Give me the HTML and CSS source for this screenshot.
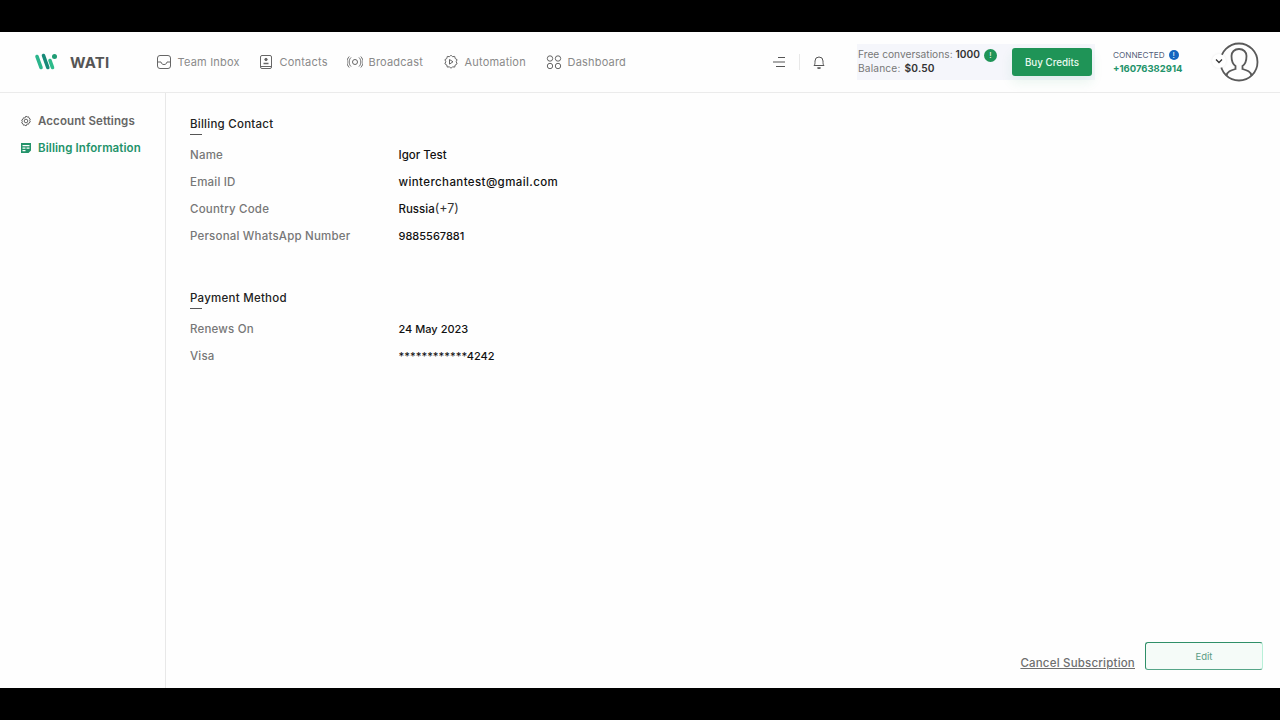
FILE: index.html
```html
<!DOCTYPE html>
<html lang="en">
<head>
<meta charset="utf-8">
<title>WATI Billing</title>
<link rel="stylesheet" href="styles.css">
</head>
<body>
<div class="letterbox"></div>
<div class="app">
  <header class="topbar">
    <div class="brand">
      <svg class="logo" width="24" height="20" viewBox="0 0 24 20"><g stroke-width="3.600" stroke-linecap="round"><path d="M3 4.500l4 11" stroke="#2bb58c"/><path d="M9.500 3.500l4.300 12" stroke="#178a78"/><path d="M16 8.500l2.500 7" stroke="#2dbb8a"/></g><circle cx="20.500" cy="4.500" r="2.500" fill="#1f9c74"/></svg>
      <span class="brand-name">WATI</span>
    </div>
    <nav class="nav">
      <a class="nav-item nav-inbox"><svg width="16" height="16" viewBox="0 0 16 16" fill="none" stroke="#666" stroke-width="1"><rect x="1.500" y="1.500" width="13" height="13" rx="2.500"/><path d="M1.500 8h3.500c.5 2 1.500 2.500 3 2.500s2.500-.5 3-2.500h3.500"/></svg>Team Inbox</a>
      <a class="nav-item nav-contacts"><svg width="16" height="16" viewBox="0 0 16 16" fill="none" stroke="#666" stroke-width="1"><rect x="2.500" y="1.500" width="11" height="13" rx="1.500"/><path d="M2.500 12.500h11" /><circle cx="8" cy="5.500" r="1.200" fill="#666"/><path d="M5.500 9.500h5" stroke-width="1.500"/></svg>Contacts</a>
      <a class="nav-item nav-broadcast"><svg width="16" height="16" viewBox="0 0 16 16" fill="none" stroke="#666" stroke-width="1"><circle cx="8" cy="8" r="2.500"/><path d="M4 3.500c-2.500 2.500-2.500 6.500 0 9M12 3.500c2.500 2.500 2.500 6.500 0 9M2.200 2.500c-3 3.500-3 7.500 0 11M13.800 2.500c3 3.500 3 7.500 0 11"/></svg>Broadcast</a>
      <a class="nav-item nav-automation"><svg width="16" height="16" viewBox="0 0 16 16" fill="none" stroke="#666" stroke-width="1"><path d="M8 1.200l1.500 1.500 2.200-.3.500 2.100 1.900 1.200-.9 2 .9 2.100-1.900 1.200-.5 2.100-2.200-.3L8 14.300l-1.500-1.500-2.200.3-.5-2.100-1.900-1.200.9-2.100-.9-2 1.900-1.200.5-2.100 2.200.3z"/><path d="M6.500 5.500l3.500 2.300-3.500 2.300z"/></svg>Automation</a>
      <a class="nav-item nav-dashboard"><svg width="16" height="16" viewBox="0 0 16 16" fill="none" stroke="#666" stroke-width="1"><circle cx="4" cy="4.500" r="2.700"/><circle cx="12" cy="4.500" r="2.700"/><circle cx="4" cy="12" r="2.700"/><circle cx="12" cy="12" r="2.700"/></svg>Dashboard</a>
    </nav>
    <div class="tools">
      <svg width="14" height="12" viewBox="0 0 14 12" stroke="#555" stroke-width="1.200"><path d="M6 1.500h7M1 6h12M4 10.500h9"/></svg>
      <span class="tool-sep"></span>
      <svg width="14" height="15" viewBox="0 0 14 15" fill="none" stroke="#555" stroke-width="1"><path d="M2 10.500c1-1 1-2 1-4.500a4 4 0 0 1 8 0c0 2.500 0 3.500 1 4.500z"/><path d="M5.500 12.500c.8 1 2.200 1 3 0" stroke-width="1.500"/></svg>
    </div>
    <div class="credits">
      <div class="credit-text">
        <div>Free conversations: <b>1000</b><i class="dot dot-green">!</i></div>
        <div class="credit-balance">Balance: <b>$0.50</b></div>
      </div>
      <button class="buy">Buy Credits</button>
    </div>
    <div class="status">
      <div class="status-top">CONNECTED<i class="dot dot-blue">!</i></div>
      <div class="phone">+16076382914</div>
    </div>
    <div class="avatar">
      <span class="chev"><svg width="8" height="6" viewBox="0 0 8 6" fill="none" stroke="#333" stroke-width="1.300"><path d="M1 1.500l3 3 3-3"/></svg></span>
      <svg width="40" height="40" viewBox="0 0 40 40" fill="none" stroke="#5a5a5a" stroke-width="1.800"><circle cx="20" cy="20" r="18.500"/><path d="M7.500 33.500c1-4 4-5 9-6.500v-3c-3-2-4-6-4-10 0-4 3-7 7.500-7s7.500 3 7.500 7c0 4-1 8-4 10v3c5 1.500 8 2.500 9 6.500"/></svg>
    </div>
  </header>
  <div class="workspace">
    <aside class="sidebar">
      <a class="side-item"><svg width="12" height="12" viewBox="0 0 12 12" fill="none" stroke="#666" stroke-width="1"><circle cx="6" cy="6" r="1.800"/><path d="M6 1l1.100 1 1.500-.2.400 1.400 1.300.8-.6 1.500.6 1.500-1.300.8-.4 1.400-1.500-.2L6 11l-1.100-1-1.500.2L3 8.800 1.700 8l.6-1.500-.6-1.500L3 4.200l.4-1.400 1.500.2z"/></svg>Account Settings</a>
      <a class="side-item active"><svg width="12" height="12" viewBox="0 0 12 12" fill="#23936a"><path d="M1 1h10v7.500L8.500 11H1zM2.500 3v1.300h7V3zM2.500 5.500v1.200h3V5.500zM6.500 5.500v1.200h3V5.500zM2.500 8v1.300h3V8z" fill-rule="evenodd"/></svg>Billing Information</a>
    </aside>
    <main class="content">
      <section class="block block-contact">
        <h2 class="block-title">Billing Contact</h2>
        <div class="row"><span class="label">Name</span><span class="value value-text">Igor Test</span></div>
        <div class="row"><span class="label">Email ID</span><span class="value value-text value-email">winterchantest@gmail.com</span></div>
        <div class="row"><span class="label">Country Code</span><span class="value value-text">Russia<span class="light">(+7)</span></span></div>
        <div class="row"><span class="label">Personal WhatsApp Number</span><span class="value">9885567881</span></div>
      </section>
      <section class="block">
        <h2 class="block-title">Payment Method</h2>
        <div class="row"><span class="label">Renews On</span><span class="value">24 May 2023</span></div>
        <div class="row"><span class="label">Visa</span><span class="value">************4242</span></div>
      </section>
      <div class="actions">
        <a class="cancel">Cancel Subscription</a>
        <button class="edit">Edit</button>
      </div>
    </main>
  </div>
</div>
<div class="letterbox"></div>
</body>
</html>
```

FILE: styles.css
```css
* { box-sizing: border-box; }
html, body { margin: 0; height: 100%; }
body {
  display: flex;
  flex-direction: column;
  height: 720px;
  overflow: hidden;
  background: #000;
  font-family: Inter, "Liberation Sans", sans-serif;
  color: #111;
}
.letterbox { height: 32px; flex: none; background: #000; }
.app { height: 656px; display: flex; flex-direction: column; background: #fefefe; }

.topbar {
  height: 61px;
  flex: none;
  display: flex;
  align-items: center;
  border-bottom: 1px solid #ebebeb;
}
.brand { width: 156px; flex: none; display: flex; align-items: center; padding-left: 34px; gap: 12px; }
.logo { flex: none; }
.brand-name { font-size: 15px; font-weight: 700; color: #555; letter-spacing: .2px; }
.nav { display: flex; align-items: center; font-size: 11px; color: #8a8a8a; }
.nav-item { display: flex; align-items: center; gap: 5.500px; letter-spacing: .2px; }
.nav-inbox { width: 102px; }
.nav-contacts { width: 89px; }
.nav-broadcast { width: 96px; }
.nav-automation { width: 103px; }
.nav-dashboard { width: 90px; }
.tools { margin-left: 136px; width: 55px; display: flex; align-items: center; flex: none; }
.tool-sep { width: 1px; height: 16px; background: #e8e8e8; margin: 0 12px 0 13px; }
.credits {
  margin-left: 30px;
  width: 238px;
  flex: none;
  display: flex;
  align-items: center;
  background: #f5f6fb;
  height: 36px;
}
.credit-text {
  width: 155px;
  height: 36px;
  padding: 4px 0 0 1px;
  font-size: 10.200px;
  line-height: 13px;
  color: #777;
  white-space: nowrap;
}
.credit-text b { font-weight: 600; color: #333; }
.credit-balance { word-spacing: 1px; letter-spacing: .15px; }
.dot {
  display: inline-block;
  width: 13px;
  height: 13px;
  border-radius: 50%;
  margin-left: 4px;
  color: #fff;
  font-size: 8px;
  line-height: 13px;
  text-align: center;
  font-style: normal;
  vertical-align: 0;
}
.dot-green { background: #1f9457; }
.dot-blue { background: #1466c0; width: 10px; height: 10px; line-height: 10px; }
.buy {
  width: 80px;
  height: 28px;
  border: 0;
  border-radius: 3px;
  background: #1f9457;
  color: #eafaf0;
  font: 500 9.800px Inter, "Liberation Sans", sans-serif;
  box-shadow: 0 6px 12px rgba(35, 160, 100, .1);
}
.status { width: 90px; flex: none; margin-left: 18px; padding-top: 1px; }
.status-top { font-size: 8.200px; color: #555f7a; line-height: 13px; white-space: nowrap; }
.phone { font-size: 9.500px; font-weight: 700; color: #23936a; line-height: 14px; }
.avatar { position: relative; width: 40px; height: 40px; margin-left: 16px; flex: none; }
.avatar > svg { display: block; }
.chev {
  position: absolute;
  left: -7px;
  top: 12px;
  width: 14px;
  height: 14px;
  border-radius: 50%;
  background: #fff;
  box-shadow: 0 0 3px rgba(0, 0, 0, .08);
  display: flex;
  align-items: center;
  justify-content: center;
}

.workspace { flex: 1; display: flex; min-height: 0; }
.sidebar {
  width: 166px;
  flex: none;
  border-right: 1px solid #e8e8e8;
  padding: 14px 0 0 20px;
}
.side-item {
  display: flex;
  align-items: center;
  gap: 6px;
  height: 27px;
  font-size: 11.500px;
  letter-spacing: .1px;
  font-weight: 600;
  color: #666;
  white-space: nowrap;
}
.side-item.active { color: #23936a; }
.content { flex: 1; position: relative; padding: 22px 0 0 24px; }
.block-contact { margin-bottom: 40px; }
.block-title {
  position: relative;
  margin: 0 0 7px;
  height: 19px;
  font-size: 11.500px;
  letter-spacing: .25px;
  line-height: 19px;
  font-weight: 500;
  color: #222;
}
.block-title::after {
  content: "";
  position: absolute;
  left: 0;
  bottom: -1px;
  width: 12px;
  height: 1px;
  background: #555;
}
.row { display: flex; align-items: center; height: 27px; font-size: 11px; }
.label { width: 208.500px; flex: none; font-size: 11.500px; letter-spacing: .2px; font-weight: 500; color: #777; white-space: nowrap; }
.value { font-weight: 500; color: #111; white-space: nowrap; }
.value-text { font-size: 11.500px; }
.value-email { letter-spacing: .4px; }
.light { font-weight: 400; color: #333; font-size: 12.500px; }
.actions {
  position: absolute;
  right: 17px;
  bottom: 18px;
  display: flex;
  align-items: flex-end;
  gap: 10px;
}
.cancel {
  font-size: 11.500px;
  letter-spacing: .2px;
  font-weight: 500;
  color: #6f6f6f;
  text-decoration: underline;
  line-height: 14px;
}
.edit {
  width: 118px;
  height: 28px;
  border: 1px solid #2f8f68;
  border-right-color: #b8f0d8;
  border-bottom-color: #55a588;
  border-radius: 3px;
  background: #f5fbf8;
  color: #5a9c84;
  font: 400 9.500px Inter, "Liberation Sans", sans-serif;
}
```
